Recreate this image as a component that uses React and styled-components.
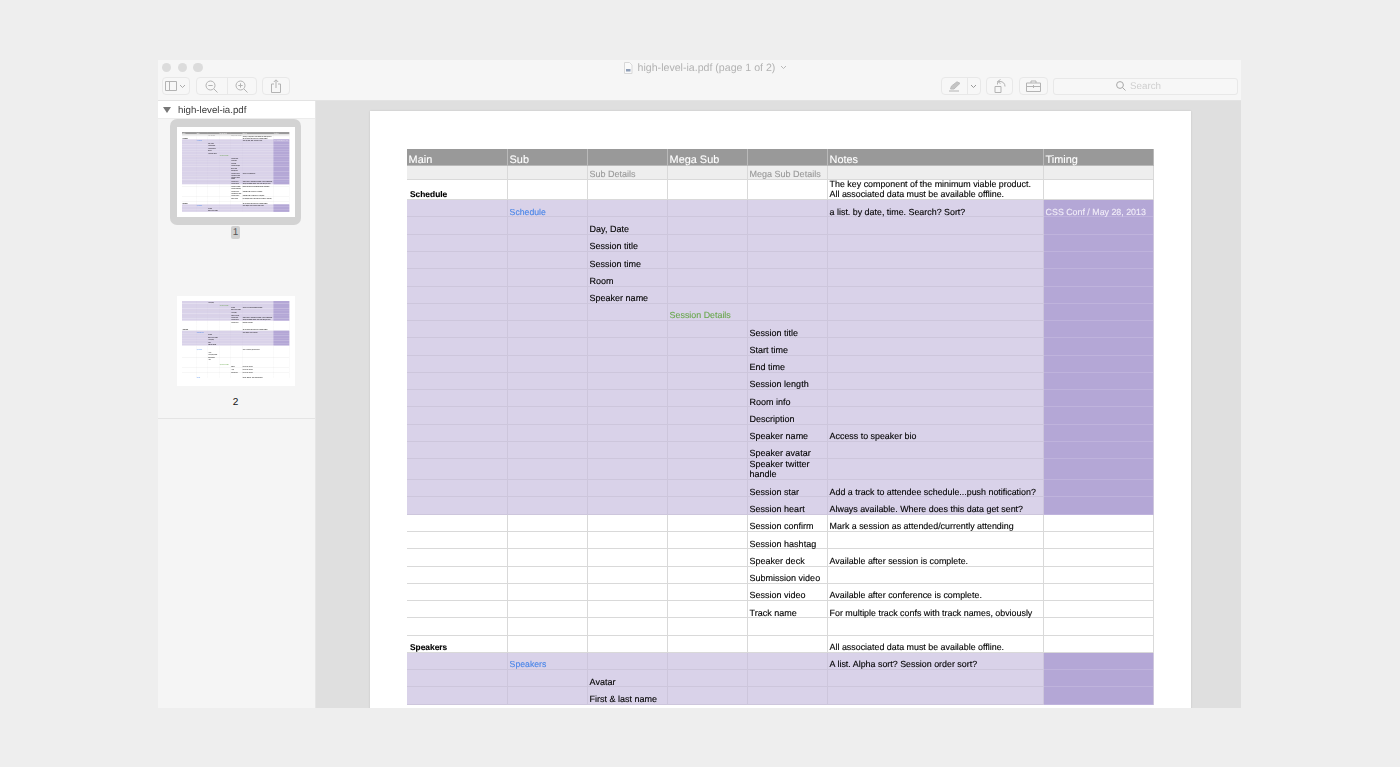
import React from "react";
import styled, { createGlobalStyle } from "styled-components";

const Global = createGlobalStyle`
  html, body { margin: 0; padding: 0; background: #eeeeee; }
  body { font-family: "Liberation Sans", Arial, sans-serif; text-rendering: geometricPrecision; }
  #root { width: 1400px; height: 767px; overflow: hidden; }
`;

const Stage = styled.div`
  width: 1400px;
  height: 767px;
  padding: 60px 159px 59px 158px;
  box-sizing: border-box;
  background: #eeeeee;
`;
const Win = styled.div`
  height: 648px;
  display: flex;
  flex-direction: column;
  background: #f6f6f6;
  overflow: hidden;
`;
const Chrome = styled.header`
  height: 41px;
  flex: none;
  box-sizing: border-box;
  border-bottom: 1px solid #e3e3e3;
  background: #f6f6f6;
  display: flex;
  flex-direction: column;
  filter: blur(0.3px);
`;
const TitleRow = styled.div`
  height: 15px;
  padding-left: 4px;
  display: flex;
  align-items: center;
`;
const Lights = styled.div`
  display: flex;
  gap: 6.2px;
  width: 45px;
  flex: none;
`;
const Light = styled.span`
  width: 9.4px;
  height: 9.4px;
  border-radius: 50%;
  background: #dcdcdc;
`;
const Title = styled.div`
  flex: 1;
  display: flex;
  align-items: center;
  justify-content: center;
  gap: 5px;
  padding-right: 38px;
  color: #b2b2b2;
  font-size: 10.6px;
`;
const ToolRow = styled.div`
  height: 18px;
  margin-top: 2px;
  padding: 0 3px 0 3.5px;
  display: flex;
  align-items: center;
  gap: 5.5px;
`;
const Group = styled.div`
  display: flex;
  height: 18px;
  box-sizing: border-box;
  border: 1px solid #e8e8e8;
  border-radius: 4px;
  background: #f7f7f7;
`;
const Tool = styled.div`
  width: ${(p) => p.$w}px;
  display: flex;
  align-items: center;
  justify-content: center;
  gap: 2px;
  box-sizing: border-box;
  & + & { border-left: 1px solid #e8e8e8; }
`;
const Spacer = styled.div`
  flex: 1;
`;
const SearchBox = styled.div`
  width: 185px;
  height: 17px;
  box-sizing: border-box;
  border: 1px solid #e8e8e8;
  border-radius: 3px;
  background: #f7f7f7;
  padding-right: 14px;
  display: flex;
  align-items: center;
  justify-content: center;
  gap: 4px;
  color: #cfcfcf;
  font-size: 9.8px;
`;
const Body = styled.div`
  flex: 1;
  min-height: 0;
  display: flex;
`;
const Sidebar = styled.aside`
  width: 158px;
  flex: none;
  box-sizing: border-box;
  background: #f5f5f5;
  border-right: 1px solid #e6e6e6;
`;
const FileRow = styled.div`
  height: 18px;
  box-sizing: border-box;
  background: #fff;
  display: flex;
  align-items: center;
  gap: 7px;
  padding: 1px 0 0 5px;
  color: #3a3a3a;
  font-size: 9.7px;
  border-bottom: 1px solid #ececec;
  filter: blur(0.25px);
`;
const Triangle = styled.span`
  width: 0;
  height: 0;
  border-left: 4px solid transparent;
  border-right: 4px solid transparent;
  border-top: 6px solid #777;
`;
const ThumbBlock = styled.div`
  height: ${(p) => p.$h}px;
  box-sizing: border-box;
  padding-right: 2px;
  display: flex;
  flex-direction: column;
  align-items: center;
  border-bottom: ${(p) => (p.$line ? "1px solid #e4e4e4" : "none")};
`;
const Frame = styled.div`
  padding: ${(p) => (p.$on ? "8px 6.5px" : "0")};
  background: ${(p) => (p.$on ? "#d3d3d3" : "transparent")};
  border-radius: 7px;
  display: flex;
`;
const ThumbPage = styled.div`
  width: 118px;
  height: 90px;
  box-sizing: border-box;
  padding: 4.8px 0 0 5px;
  background: #fff;
  overflow: hidden;
  filter: blur(0.35px);
`;
const Scaled = styled.div`
  width: 747px;
  transform: scale(0.1436);
  transform-origin: 0 0;
`;
const PageNo = styled.div`
  margin-top: ${(p) => p.$gap}px;
  min-width: 9px;
  height: 13px;
  line-height: 13px;
  text-align: center;
  font-size: 10px;
  color: ${(p) => (p.$on ? "#555" : "#111")};
  background: ${(p) => (p.$on ? "#d0d0d0" : "transparent")};
  border-radius: 2px;
`;
const Main = styled.main`
  flex: 1;
  min-width: 0;
  background: #dfdfdf;
  padding: 10px 50px 0 54px;
  overflow: hidden;
`;
const Sheet = styled.section`
  height: 700px;
  background: #fff;
  padding: 38px 37px 0 37px;
  box-shadow: 0 0 2px rgba(0, 0, 0, 0.12);
  filter: blur(0.25px);
`;
const Grid = styled.div`
  width: 747px;
  display: flex;
  flex-direction: column;
  line-height: 10.2px;
  color: #000;
`;
const palette = {
  head: { bg: "#999999", line: "#b9b9b9", fg: "#ffffff" },
  sub: { bg: "#eeeeee", line: "#d9d9d9", fg: "#999999" },
  plain: { bg: "#ffffff", line: "#d9d9d9", fg: "#000000" },
  purple: { bg: "#d9d2e9", line: "#cdc6dc", fg: "#000000" },
};
const Row = styled.div`
  height: ${(p) => p.$h}px;
  display: grid;
  grid-template-columns: 101px 80px 80px 80px 80px 216px 110px;
  grid-auto-rows: minmax(0, 1fr);
  background: ${(p) => palette[p.$kind].bg};
  box-shadow: inset 0 -1px 0 ${(p) => palette[p.$kind].line};
`;
const Cell = styled.div`
  padding: 0 1px 0.5px ${(p) => (p.$bold ? 3 : 1.6)}px;
  display: flex;
  align-items: flex-end;
  min-width: 0;
  white-space: pre-line;
  border-right: 1px solid ${(p) => palette[p.$kind].line};
  background: ${(p) => (p.$tint ? "#b4a7d6" : "transparent")};
  box-shadow: ${(p) => (p.$tint ? "inset 0 -1px 0 #bfb3dc" : "none")};
  color: ${(p) => p.$fg};
  font-size: ${(p) => p.$size}px;
  font-weight: ${(p) => (p.$bold ? 700 : 400)};
  -webkit-text-stroke: 0.12px currentColor;
`;

const toneFor = (kind, col) => {
  if (kind === "head" || kind === "sub") return palette[kind].fg;
  if (col === 1) return "#4a86e8";
  if (col === 3) return "#6aa84f";
  if (col === 6) return "#f1edf8";
  return "#000000";
};
const sizes = [8.4, 8.7, 9, 8.9, 9, 8.88, 8.85];
const sizeFor = (kind, col) => (kind === "head" ? 10.9 : sizes[col]);

const r = (kind, c = {}, h = 17.27) => ({ kind, c, h });

const page1 = [
  r("head", { 0: "Main", 1: "Sub", 3: "Mega Sub", 5: "Notes", 6: "Timing" }, 17.2),
  r("sub", { 2: "Sub Details", 4: "Mega Sub Details" }, 13.5),
  r("plain", { 0: "Schedule", 5: "The key component of the minimum viable product.\nAll associated data must be available offline." }, 20.5),
  r("purple", { 1: "Schedule", 5: "a list. by date, time. Search? Sort?", 6: "CSS Conf / May 28, 2013" }),
  r("purple", { 2: "Day, Date" }),
  r("purple", { 2: "Session title" }),
  r("purple", { 2: "Session time" }),
  r("purple", { 2: "Room" }),
  r("purple", { 2: "Speaker name" }),
  r("purple", { 3: "Session Details" }),
  r("purple", { 4: "Session title" }),
  r("purple", { 4: "Start time" }),
  r("purple", { 4: "End time" }),
  r("purple", { 4: "Session length" }),
  r("purple", { 4: "Room info" }),
  r("purple", { 4: "Description" }),
  r("purple", { 4: "Speaker name", 5: "Access to speaker bio" }),
  r("purple", { 4: "Speaker avatar" }),
  r("purple", { 4: "Speaker twitter handle" }, 21),
  r("purple", { 4: "Session star", 5: "Add a track to attendee schedule...push notification?" }),
  r("purple", { 4: "Session heart", 5: "Always available. Where does this data get sent?" }),
  r("plain", { 4: "Session confirm", 5: "Mark a session as attended/currently attending" }),
  r("plain", { 4: "Session hashtag" }),
  r("plain", { 4: "Speaker deck", 5: "Available after session is complete." }),
  r("plain", { 4: "Submission video" }),
  r("plain", { 4: "Session video", 5: "Available after conference is complete." }),
  r("plain", { 4: "Track name", 5: "For multiple track confs with track names, obviously" }),
  r("plain"),
  r("plain", { 0: "Speakers", 5: "All associated data must be available offline." }),
  r("purple", { 1: "Speakers", 5: "A list. Alpha sort? Session order sort?" }),
  r("purple", { 2: "Avatar" }),
  r("purple", { 2: "First & last name" }),
];

const page2 = [
  r("purple", { 2: "Company" }),
  r("purple", { 3: "Session Details" }),
  r("purple", { 4: "Avatar", 5: "Access to session details and data" }),
  r("purple", { 4: "First & last name" }),
  r("purple", { 4: "Company" }),
  r("purple", { 4: "Twitter handle" }),
  r("purple", { 4: "Session title", 5: "Add a track to attendee schedule...push notification?" }),
  r("purple", { 4: "Session time", 5: "Always available. Where does this data get sent?" }),
  r("plain", { 4: "Session star", 5: "Mark as attended" }),
  r("plain"),
  r("plain"),
  r("plain", { 0: "Attendees", 5: "All associated data must be available offline." }),
  r("purple", { 1: "Attendee list", 5: "A list. Alpha sort? Search?" }),
  r("purple", { 2: "Avatar" }),
  r("purple", { 2: "First & last name" }),
  r("purple", { 2: "Company" }),
  r("purple", { 2: "Title" }),
  r("purple", { 2: "Twitter handle" }),
  r("plain"),
  r("plain", { 1: "Sponsors", 5: "A list. Sorted by sponsor level." }),
  r("plain", { 2: "Logo" }),
  r("plain", { 2: "Company name" }),
  r("plain", { 2: "Description" }),
  r("plain", { 2: "Link" }),
  r("plain"),
  r("plain", { 3: "Sponsor Details" }),
  r("plain", { 4: "Name", 5: "Data to be shown" }),
  r("plain", { 4: "Logo", 5: "Data to be shown" }),
  r("plain", { 4: "Description", 5: "Data to be shown" }),
  r("plain"),
  r("plain", { 1: "Venue", 5: "Venue address, map and directions" }),
];

const SheetGrid = ({ rows }) => (
  <Grid>
    {rows.map((row, i) => (
      <Row key={i} $h={row.h} $kind={row.kind}>
        {[0, 1, 2, 3, 4, 5, 6].map((col) => (
          <Cell
            key={col}
            $kind={row.kind}
            $bold={col === 0 && row.kind === "plain"}
            $tint={col === 6 && row.kind === "purple"}
            $fg={toneFor(row.kind, col)}
            $size={sizeFor(row.kind, col)}
          >
            <span>{row.c[col]}</span>
          </Cell>
        ))}
      </Row>
    ))}
  </Grid>
);

const Ico = styled.svg`
  display: block;
  fill: none;
  stroke: ${(p) => p.$c || "#b3b3b3"};
  stroke-width: 1;
`;

const Chevron = ({ c }) => (
  <Ico $c={c || "#aaa"} width="7" height="5" viewBox="0 0 7 5">
    <path d="M1 1l2.5 2.5L6 1" />
  </Ico>
);

const App = () => (
  <>
    <Global />
    <Stage>
      <Win>
        <Chrome>
          <TitleRow>
            <Lights>
              <Light />
              <Light />
              <Light />
            </Lights>
            <Title>
              <Ico width="10" height="12" viewBox="0 0 10 12" $c="#d8d8d8">
                <path d="M1.5.5h5l2.5 2.5v8.500h-7.500z" fill="#fafafa" />
                <path d="M3 7h4.500v2.500h-4.500z" fill="#8f9fb8" stroke="none" />
              </Ico>
              <span>high-level-ia.pdf (page 1 of 2)</span>
              <Chevron c="#b8b8b8" />
            </Title>
          </TitleRow>
          <ToolRow>
            <Group>
              <Tool $w={26.5}>
                <Ico width="12" height="10" viewBox="0 0 12 10">
                  <path d="M.5.5h11v9h-11zM4.500.5v9" />
                </Ico>
                <Chevron />
              </Tool>
            </Group>
            <Group>
              <Tool $w={30}>
                <Ico width="13" height="13" viewBox="0 0 13 13">
                  <circle cx="5.500" cy="5.500" r="4.500" />
                  <path d="M3.300 5.500h4.400M9 9l3.500 3.500" />
                </Ico>
              </Tool>
              <Tool $w={29}>
                <Ico width="13" height="13" viewBox="0 0 13 13">
                  <circle cx="5.500" cy="5.500" r="4.500" />
                  <path d="M3.300 5.500h4.400M5.500 3.300v4.400M9 9l3.500 3.500" />
                </Ico>
              </Tool>
            </Group>
            <Group>
              <Tool $w={26}>
                <Ico width="10" height="14" viewBox="0 0 10 14">
                  <path d="M3 5H.5v8.500h9V5H7M5 9V1M2.800 3L5 .8 7.200 3" />
                </Ico>
              </Tool>
            </Group>
            <Spacer />
            <Group>
              <Tool $w={25}>
                <Ico width="13" height="11" viewBox="0 0 13 11">
                  <path d="M1 10h10" />
                  <path d="M2.500 8l1-3L9 .8l3 1.500L6 8z" fill="#c4c4c4" stroke="#bcbcbc" />
                </Ico>
              </Tool>
              <Tool $w={12.5}>
                <Chevron c="#999" />
              </Tool>
            </Group>
            <Group>
              <Tool $w={25}>
                <Ico width="14" height="14" viewBox="0 0 14 14">
                  <path d="M2 7.500h6v6H2zM4.500 5.500v-2a1 1 0 0 1 1-1h1.500c3 0 5 2 5 5" />
                  <path d="M7.500.5l-3 2 3 2" />
                </Ico>
              </Tool>
            </Group>
            <Group>
              <Tool $w={27}>
                <Ico width="15" height="12" viewBox="0 0 15 12">
                  <path d="M.5 3h14v8.500H.5zM5 3V1h5v2M.5 6.500h14M7.500 5v3" />
                </Ico>
              </Tool>
            </Group>
            <SearchBox>
              <Ico width="10" height="10" viewBox="0 0 10 10" $c="#a8a8a8">
                <circle cx="4" cy="4" r="3.400" />
                <path d="M6.500 6.500l3 3" />
              </Ico>
              <span>Search</span>
            </SearchBox>
          </ToolRow>
        </Chrome>
        <Body>
          <Sidebar>
            <FileRow>
              <Triangle />
              <span>high-level-ia.pdf</span>
            </FileRow>
            <ThumbBlock $h={177}>
              <Frame $on>
                <ThumbPage>
                  <Scaled>
                    <SheetGrid rows={page1} />
                  </Scaled>
                </ThumbPage>
              </Frame>
              <PageNo $on $gap={1}>
                1
              </PageNo>
            </ThumbBlock>
            <ThumbBlock $h={123} $line>
              <Frame>
                <ThumbPage>
                  <Scaled>
                    <SheetGrid rows={page2} />
                  </Scaled>
                </ThumbPage>
              </Frame>
              <PageNo $gap={10}>2</PageNo>
            </ThumbBlock>
          </Sidebar>
          <Main>
            <Sheet>
              <SheetGrid rows={page1} />
            </Sheet>
          </Main>
        </Body>
      </Win>
    </Stage>
  </>
);

export default App;
